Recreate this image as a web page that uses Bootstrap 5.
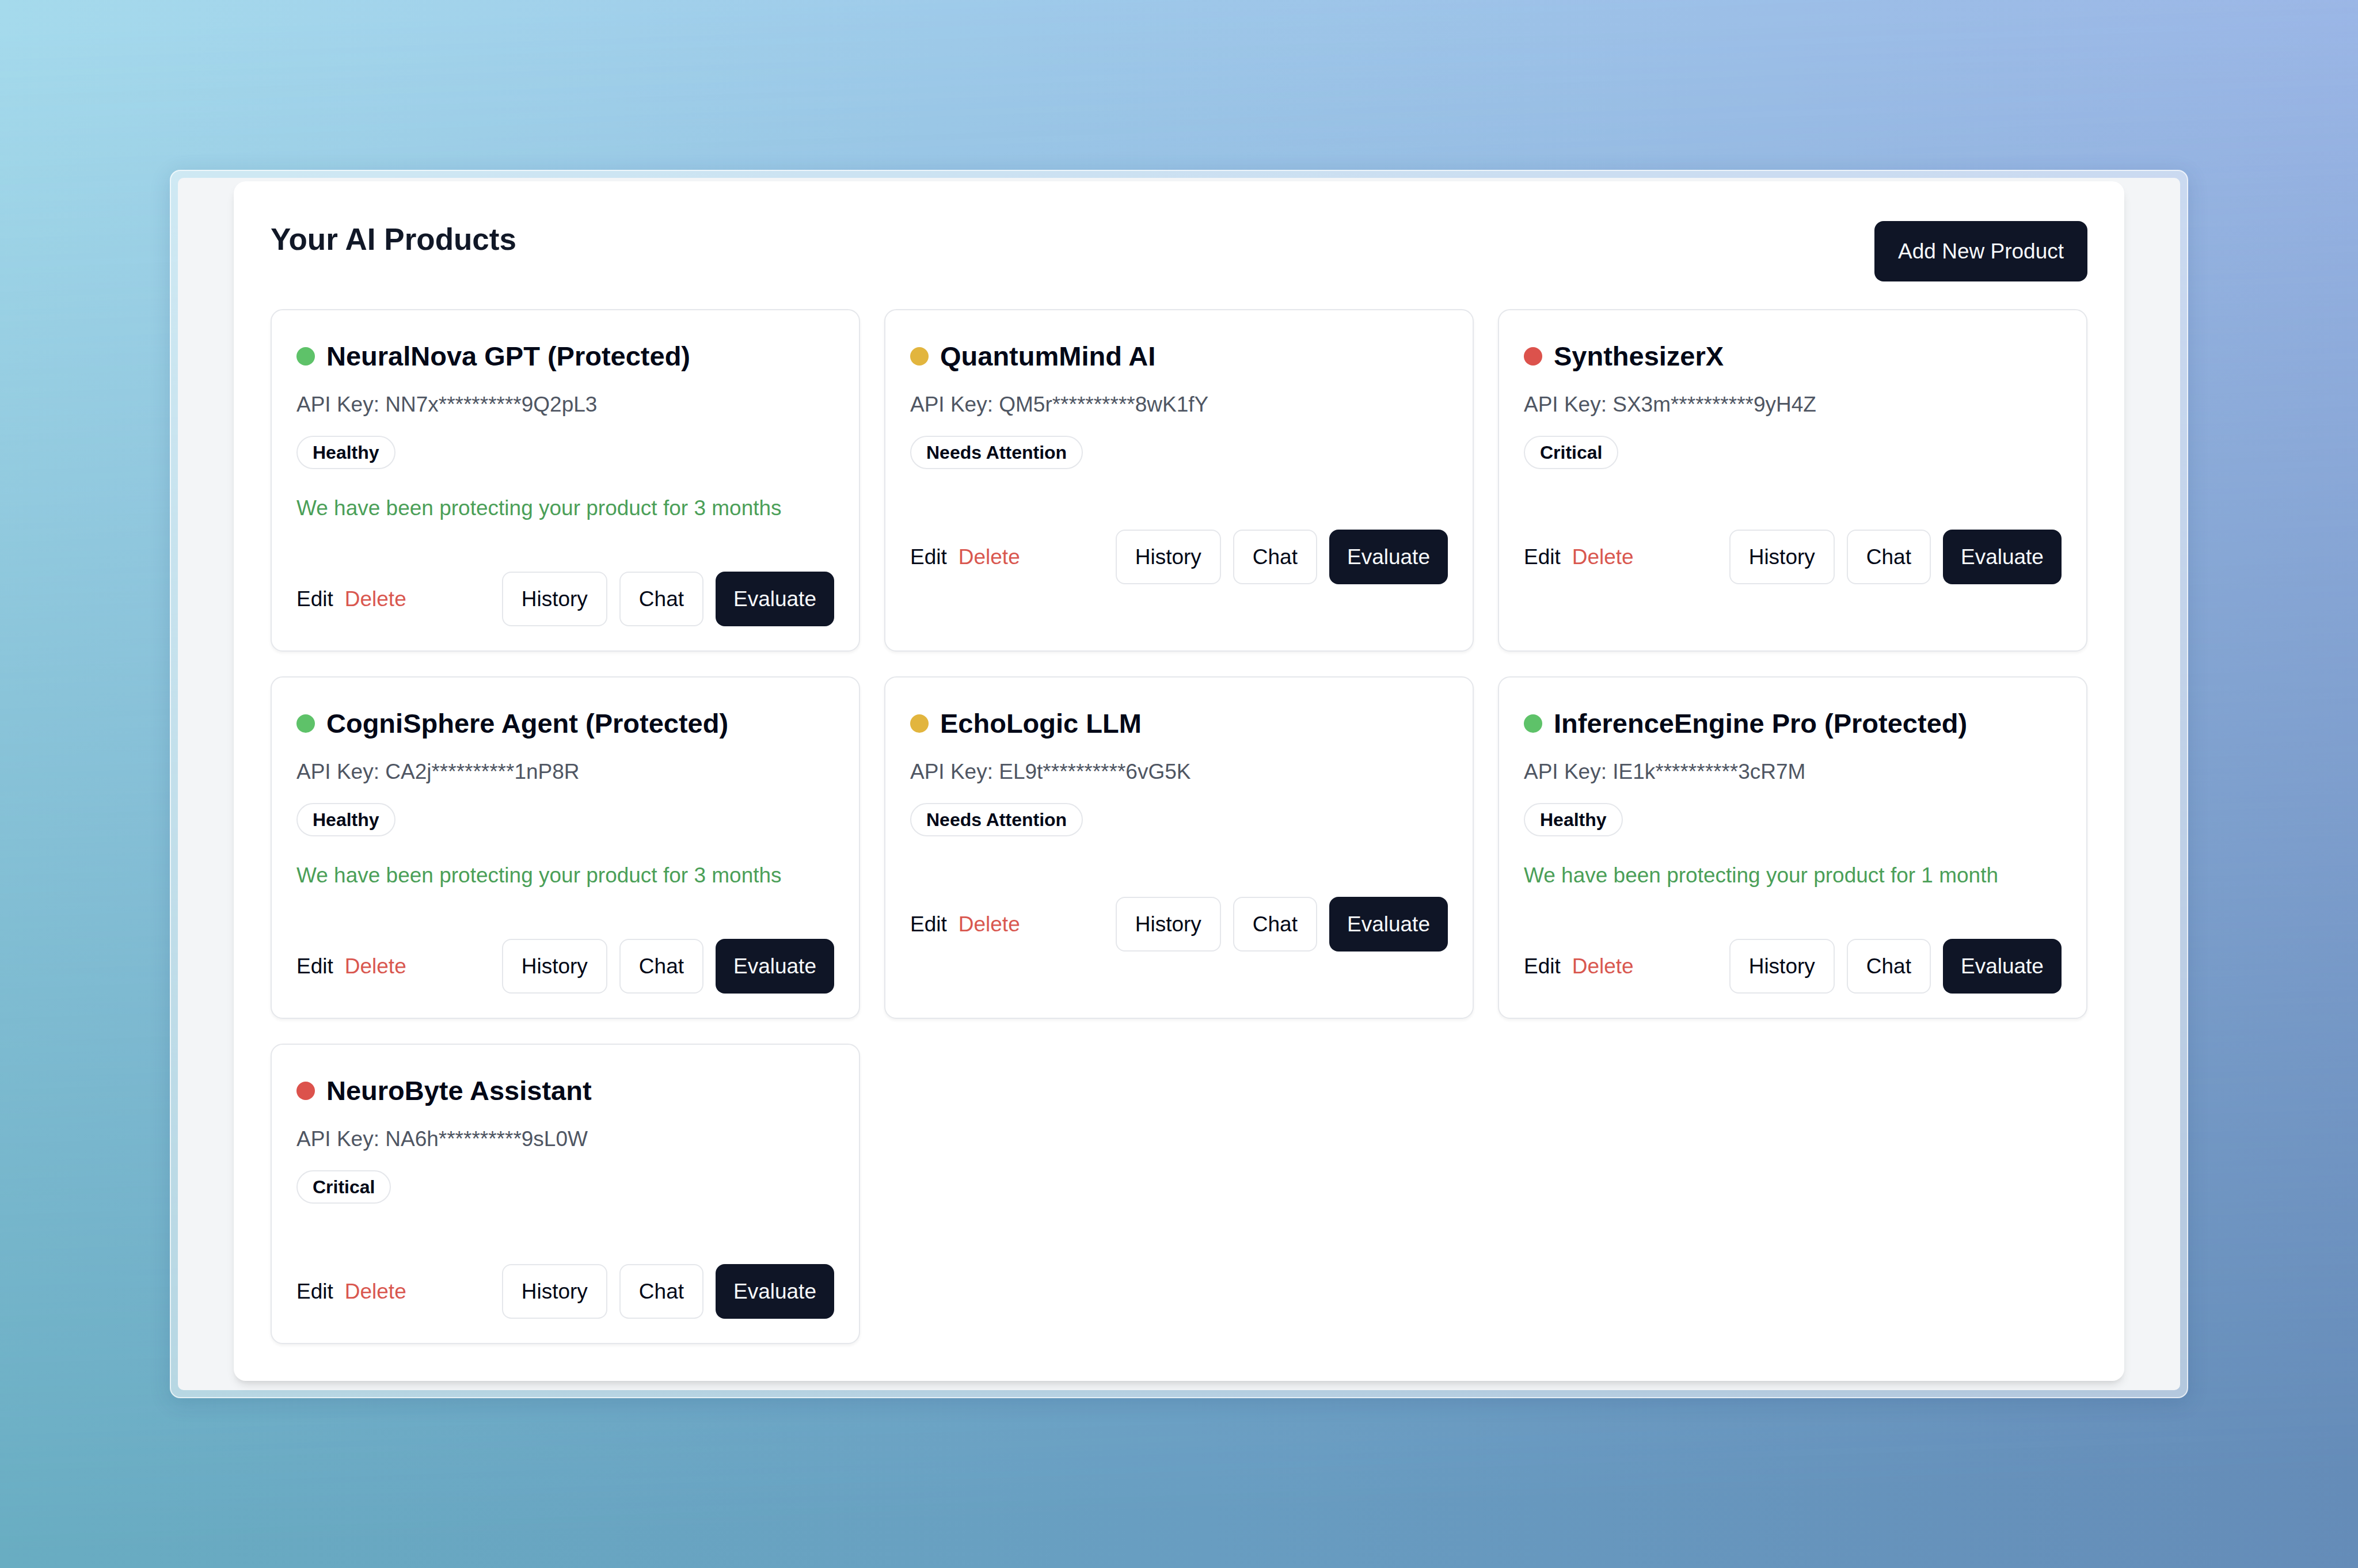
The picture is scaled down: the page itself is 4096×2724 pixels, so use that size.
<!DOCTYPE html>
<html lang="en">
<head>
<meta charset="utf-8">
<meta name="viewport" content="width=device-width, initial-scale=1">
<title>Your AI Products</title>
<link rel="stylesheet" href="https://cdn.jsdelivr.net/npm/bootstrap@5.3.0/dist/css/bootstrap.min.css">
<style>
  :root {
    --ink: #020817;
    --navy: #0f1526;
    --line: #e5e7eb;
  }
  body {
    font-family: "Liberation Sans", Arial, sans-serif;
    font-size: 37px;
    line-height: 53px;
    color: var(--ink);
    background: linear-gradient(100deg, #a5daec 0%, #9fcbea 36%, #9db5e8 100%);
  }
  /* Deeper tones fade in toward the bottom of the page */
  .backdrop-fade {
    background: linear-gradient(80deg, #69adc2 0%, #689dc1 46%, #6488b6 100%);
    -webkit-mask-image: linear-gradient(178deg, transparent 2%, #000 94%);
    mask-image: linear-gradient(178deg, transparent 2%, #000 94%);
    z-index: -1;
  }
  .stage { padding: 295px; }
  .glass-frame {
    padding: 12px;
    border: 2px solid rgba(255, 255, 255, .65);
    border-radius: 18px;
    background: rgba(255, 255, 255, .5);
    box-shadow: 0 8px 36px rgba(30, 60, 110, .16);
  }
  .screen {
    padding: 6px 97px 16px;
    border-radius: 10px;
    background: #f3f5f7;
  }
  .panel {
    padding: 69px 64px 64px;
    border-radius: 21px;
    background: #fff;
    box-shadow: 0 10px 16px -3px rgba(0, 0, 0, .1), 0 5px 10px -5px rgba(0, 0, 0, .1);
  }
  .panel-head { margin-bottom: 48px; }
  .panel-title {
    font-size: 53px;
    line-height: 63px;
    font-weight: 700;
    color: #111827;
  }
  .product-grid { --bs-gutter-x: 42px; --bs-gutter-y: 43px; }
  .product {
    border: 2px solid var(--line);
    border-radius: 21px;
    box-shadow: 0 3px 5px rgba(0, 0, 0, .05);
    color: var(--ink);
  }
  .product > .card-body { padding: 43px 43px 42px; }
  .product-name {
    gap: 20px;
    margin-bottom: 20px;
    font-size: 47px;
    line-height: 74px;
    font-weight: 700;
  }
  .dot { width: 32px; height: 32px; flex: none; }
  .dot-good { background: #5ec269; }
  .dot-warn { background: #e2b53e; }
  .dot-bad { background: #dc524c; }
  .api-key { margin-bottom: 28px; color: #4f5663; }
  .status-pill {
    display: block;
    width: fit-content;
    padding: 0 26px;
    border: 2px solid var(--line);
    font-size: 32px;
    line-height: 54px;
    font-weight: 700;
    color: var(--ink);
  }
  .guard-note { margin: 41px 0 0; color: #4b9f58; }
  .actions { margin-top: 105px; }
  .guard-note + .actions { margin-top: 84px; }
  .actions { gap: 20px; }
  .action-set { gap: 21px; }
  .actions a { color: var(--ink); }
  .actions a.remove { color: #d9574f; }
  .btn {
    --bs-btn-font-size: 37px;
    --bs-btn-line-height: 53px;
    --bs-btn-border-radius: 16px;
  }
  .btn-navy {
    --bs-btn-color: #f8fafc;
    --bs-btn-bg: var(--navy);
    --bs-btn-hover-color: #f8fafc;
    --bs-btn-hover-bg: #272d3d;
    --bs-btn-border-width: 0;
    --bs-btn-padding-x: 31px;
    --bs-btn-padding-y: 21px;
  }
  .btn-plain {
    --bs-btn-color: var(--ink);
    --bs-btn-bg: #fff;
    --bs-btn-border-color: var(--line);
    --bs-btn-hover-bg: #f1f5f9;
    --bs-btn-hover-border-color: #e2e8f0;
    --bs-btn-border-width: 2px;
    --bs-btn-padding-x: 32px;
    --bs-btn-padding-y: 19px;
  }
  .btn-add { --bs-btn-padding-x: 41px; --bs-btn-padding-y: 26px; }
</style>
</head>
<body class="position-relative min-vh-100">
<div class="backdrop-fade position-absolute top-0 start-0 w-100 h-100"></div>
<main class="stage">
  <div class="glass-frame">
    <div class="screen">
      <section class="panel">
        <header class="panel-head d-flex justify-content-between align-items-start">
          <h1 class="panel-title mb-0">Your AI Products</h1>
          <button type="button" class="btn btn-navy btn-add">Add New Product</button>
        </header>
        <div class="product-grid row row-cols-3">

          <div class="col">
            <article class="product card h-100">
              <div class="card-body">
                <h2 class="product-name d-flex align-items-center"><span class="dot dot-good rounded-circle"></span>NeuralNova GPT (Protected)</h2>
                <p class="api-key">API Key: NN7x**********9Q2pL3</p>
                <span class="status-pill rounded-pill">Healthy</span>
                <p class="guard-note">We have been protecting your product for 3 months</p>
                <div class="actions d-flex align-items-center">
                  <a href="#" class="text-decoration-none">Edit</a>
                  <a href="#" class="remove text-decoration-none">Delete</a>
                  <div class="action-set d-flex ms-auto">
                    <button type="button" class="btn btn-plain">History</button>
                    <button type="button" class="btn btn-plain">Chat</button>
                    <button type="button" class="btn btn-navy">Evaluate</button>
                  </div>
                </div>
              </div>
            </article>
          </div>

          <div class="col">
            <article class="product card h-100">
              <div class="card-body">
                <h2 class="product-name d-flex align-items-center"><span class="dot dot-warn rounded-circle"></span>QuantumMind AI</h2>
                <p class="api-key">API Key: QM5r**********8wK1fY</p>
                <span class="status-pill rounded-pill">Needs Attention</span>
                <div class="actions d-flex align-items-center">
                  <a href="#" class="text-decoration-none">Edit</a>
                  <a href="#" class="remove text-decoration-none">Delete</a>
                  <div class="action-set d-flex ms-auto">
                    <button type="button" class="btn btn-plain">History</button>
                    <button type="button" class="btn btn-plain">Chat</button>
                    <button type="button" class="btn btn-navy">Evaluate</button>
                  </div>
                </div>
              </div>
            </article>
          </div>

          <div class="col">
            <article class="product card h-100">
              <div class="card-body">
                <h2 class="product-name d-flex align-items-center"><span class="dot dot-bad rounded-circle"></span>SynthesizerX</h2>
                <p class="api-key">API Key: SX3m**********9yH4Z</p>
                <span class="status-pill rounded-pill">Critical</span>
                <div class="actions d-flex align-items-center">
                  <a href="#" class="text-decoration-none">Edit</a>
                  <a href="#" class="remove text-decoration-none">Delete</a>
                  <div class="action-set d-flex ms-auto">
                    <button type="button" class="btn btn-plain">History</button>
                    <button type="button" class="btn btn-plain">Chat</button>
                    <button type="button" class="btn btn-navy">Evaluate</button>
                  </div>
                </div>
              </div>
            </article>
          </div>

          <div class="col">
            <article class="product card h-100">
              <div class="card-body">
                <h2 class="product-name d-flex align-items-center"><span class="dot dot-good rounded-circle"></span>CogniSphere Agent (Protected)</h2>
                <p class="api-key">API Key: CA2j**********1nP8R</p>
                <span class="status-pill rounded-pill">Healthy</span>
                <p class="guard-note">We have been protecting your product for 3 months</p>
                <div class="actions d-flex align-items-center">
                  <a href="#" class="text-decoration-none">Edit</a>
                  <a href="#" class="remove text-decoration-none">Delete</a>
                  <div class="action-set d-flex ms-auto">
                    <button type="button" class="btn btn-plain">History</button>
                    <button type="button" class="btn btn-plain">Chat</button>
                    <button type="button" class="btn btn-navy">Evaluate</button>
                  </div>
                </div>
              </div>
            </article>
          </div>

          <div class="col">
            <article class="product card h-100">
              <div class="card-body">
                <h2 class="product-name d-flex align-items-center"><span class="dot dot-warn rounded-circle"></span>EchoLogic LLM</h2>
                <p class="api-key">API Key: EL9t**********6vG5K</p>
                <span class="status-pill rounded-pill">Needs Attention</span>
                <div class="actions d-flex align-items-center">
                  <a href="#" class="text-decoration-none">Edit</a>
                  <a href="#" class="remove text-decoration-none">Delete</a>
                  <div class="action-set d-flex ms-auto">
                    <button type="button" class="btn btn-plain">History</button>
                    <button type="button" class="btn btn-plain">Chat</button>
                    <button type="button" class="btn btn-navy">Evaluate</button>
                  </div>
                </div>
              </div>
            </article>
          </div>

          <div class="col">
            <article class="product card h-100">
              <div class="card-body">
                <h2 class="product-name d-flex align-items-center"><span class="dot dot-good rounded-circle"></span>InferenceEngine Pro (Protected)</h2>
                <p class="api-key">API Key: IE1k**********3cR7M</p>
                <span class="status-pill rounded-pill">Healthy</span>
                <p class="guard-note">We have been protecting your product for 1 month</p>
                <div class="actions d-flex align-items-center">
                  <a href="#" class="text-decoration-none">Edit</a>
                  <a href="#" class="remove text-decoration-none">Delete</a>
                  <div class="action-set d-flex ms-auto">
                    <button type="button" class="btn btn-plain">History</button>
                    <button type="button" class="btn btn-plain">Chat</button>
                    <button type="button" class="btn btn-navy">Evaluate</button>
                  </div>
                </div>
              </div>
            </article>
          </div>

          <div class="col">
            <article class="product card h-100">
              <div class="card-body">
                <h2 class="product-name d-flex align-items-center"><span class="dot dot-bad rounded-circle"></span>NeuroByte Assistant</h2>
                <p class="api-key">API Key: NA6h**********9sL0W</p>
                <span class="status-pill rounded-pill">Critical</span>
                <div class="actions d-flex align-items-center">
                  <a href="#" class="text-decoration-none">Edit</a>
                  <a href="#" class="remove text-decoration-none">Delete</a>
                  <div class="action-set d-flex ms-auto">
                    <button type="button" class="btn btn-plain">History</button>
                    <button type="button" class="btn btn-plain">Chat</button>
                    <button type="button" class="btn btn-navy">Evaluate</button>
                  </div>
                </div>
              </div>
            </article>
          </div>

        </div>
      </section>
    </div>
  </div>
</main>
<script src="https://cdn.jsdelivr.net/npm/bootstrap@5.3.0/dist/js/bootstrap.bundle.min.js"></script>
</body>
</html>
